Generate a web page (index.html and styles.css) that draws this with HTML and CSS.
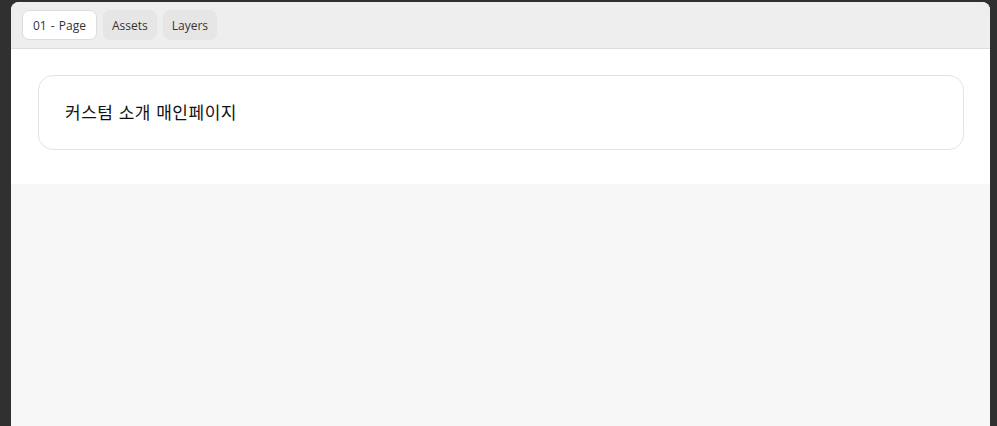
FILE: index.html
```html
<!DOCTYPE html>
<html lang="ko">
<head>
<meta charset="utf-8">
<link rel="stylesheet" href="styles.css">
</head>
<body>
<div class="window">
  <div class="toolbar">
    <button class="tab tab-active">01 - Page</button>
    <button class="tab">Assets</button>
    <button class="tab">Layers</button>
  </div>
  <div class="content">
    <div class="card">커스텀 소개 매인페이지</div>
  </div>
  <div class="canvas"></div>
</div>
</body>
</html>
```
FILE: styles.css
```css
html, body {
  margin: 0;
  height: 100%;
  background: #303030;
  overflow: hidden;
}
body {
  padding: 2px 7px 0 11px;
  box-sizing: border-box;
  font-family: "Open Sans", "Noto Sans", sans-serif;
}
.window {
  height: 100%;
  background: #f7f7f7;
  border-radius: 8px 8px 0 0;
  overflow: hidden;
  display: flex;
  flex-direction: column;
}
.toolbar {
  height: 47px;
  flex: none;
  box-sizing: border-box;
  background: #eeeeee;
  border-bottom: 1px solid #dddddd;
  display: flex;
  align-items: flex-start;
  gap: 6px;
  padding: 8px 0 0 11px;
}
.tab {
  height: 30px;
  border: 1px solid #e6e6e6;
  background: #e6e6e6;
  border-radius: 7px;
  font-family: "Open Sans", "Noto Sans", sans-serif;
  font-size: 12px;
  color: #333;
  padding: 0 8px;
  margin: 0;
  cursor: pointer;
}
.tab-active {
  background: #ffffff;
  border-color: #dcdcdc;
  padding: 0 10px;
  word-spacing: 1px;
}
.content {
  flex: none;
  background: #ffffff;
  padding: 26px 26px 34px 27px;
  height: 135px;
  box-sizing: border-box;
}
.card {
  height: 75px;
  box-sizing: border-box;
  border: 1px solid #e3e3e3;
  border-radius: 15px;
  display: flex;
  align-items: center;
  padding: 0 26px 2px;
  font-family: "Noto Sans CJK KR", "Noto Sans", sans-serif;
  font-size: 17px;
  letter-spacing: 0.5px;
  font-weight: 400;
  color: #111;
}
.canvas {
  flex: 1;
}
```
